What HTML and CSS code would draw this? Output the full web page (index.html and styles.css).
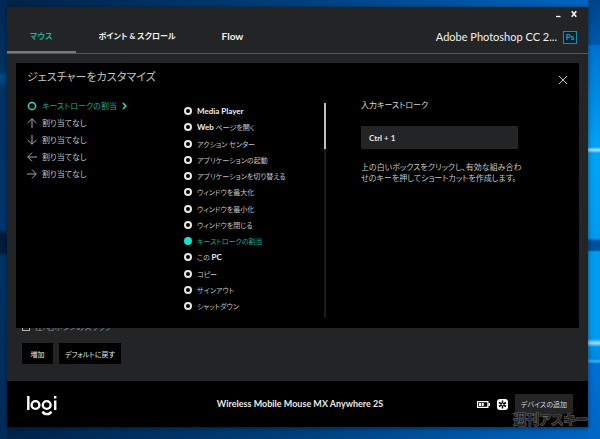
FILE: index.html
```html
<!DOCTYPE html>
<html lang="ja">
<head>
    <meta charset="UTF-8">
    <meta name="viewport" content="width=device-width, initial-scale=1.0">
    <title>Logitech Options</title>
    <link rel="stylesheet" href="styles.css">
</head>
<body>

    <div class="window">
        <!-- Window header -->
        <header class="header">
            <div class="window-controls">
                <button type="button" aria-label="最小化">
                    <svg width="5" height="8" viewBox="0 0 5 8"><path d="M0 6.5h4.5" stroke="#fff" stroke-width="1.3"/></svg>
                </button>
                <button type="button" aria-label="閉じる">
                    <svg width="6" height="8" viewBox="0 0 6 8"><path d="M.7 1.3l4.6 5.4M5.3 1.3L.7 6.7" stroke="#fff" stroke-width="1.5"/></svg>
                </button>
            </div>
            <div class="header-row">
                <nav class="tabs">
                    <a href="#" class="tab active">マウス</a>
                    <a href="#" class="tab">ポイント &amp; スクロール</a>
                    <a href="#" class="tab tab-flow">Flow</a>
                </nav>
                <div class="app">
                    <span class="app-name">Adobe Photoshop CC 2...</span>
                    <span class="app-icon">Ps</span>
                </div>
            </div>
        </header>

        <main class="content">
            <div class="page">
                <label class="swap"><input type="checkbox">左/右ボタンのスワップ</label>
                <div class="page-buttons">
                    <button type="button">増加</button>
                    <button type="button">デフォルトに戻す</button>
                </div>
            </div>

            <!-- Gesture dialog -->
            <section class="dialog">
                <div class="dialog-head">
                    <h1>ジェスチャーをカスタマイズ</h1>
                    <button type="button" class="close" aria-label="閉じる">
                        <svg width="10" height="10" viewBox="0 0 10 10"><path d="M1 1l8 8M9 1L1 9" stroke="#c4c4c4"/></svg>
                    </button>
                </div>
                <div class="dialog-body">
                    <ul class="gestures">
                        <li class="active">
                            <svg class="icon" width="10" height="10" viewBox="0 0 10 10"><circle cx="5" cy="5" r="3.6" stroke-width="1.5"/></svg>
                            <a href="#">キーストロークの割当</a>
                            <svg class="icon" width="5" height="8" viewBox="0 0 5 8"><path d="M1 1l2.8 3L1 7" stroke-width="1.6"/></svg>
                        </li>
                        <li>
                            <svg class="icon" width="10" height="10" viewBox="0 0 10 10"><path d="M5 10V1M.6 5L5 .7 9.400 5"/></svg>
                            <a href="#">割り当てなし</a>
                        </li>
                        <li>
                            <svg class="icon" width="10" height="10" viewBox="0 0 10 10"><path d="M5 0v9M.6 5L5 9.300 9.400 5"/></svg>
                            <a href="#">割り当てなし</a>
                        </li>
                        <li>
                            <svg class="icon" width="10" height="10" viewBox="0 0 10 10"><path d="M10 5H1M5 .6L.7 5 5 9.400"/></svg>
                            <a href="#">割り当てなし</a>
                        </li>
                        <li>
                            <svg class="icon" width="10" height="10" viewBox="0 0 10 10"><path d="M0 5h9M5 .6L9.300 5 5 9.400"/></svg>
                            <a href="#">割り当てなし</a>
                        </li>
                    </ul>

                    <div class="actions">
                        <div class="action-list">
                            <label><input type="radio" name="action"><b>Media Player</b></label>
                            <label><input type="radio" name="action"><span><b>Web</b> ページを開く</span></label>
                            <label><input type="radio" name="action">アクション センター</label>
                            <label><input type="radio" name="action">アプリケーションの起動</label>
                            <label><input type="radio" name="action">アプリケーションを切り替える</label>
                            <label><input type="radio" name="action">ウィンドウを最大化</label>
                            <label><input type="radio" name="action">ウィンドウを最小化</label>
                            <label><input type="radio" name="action">ウィンドウを閉じる</label>
                            <label><input type="radio" name="action" checked>キーストロークの割当</label>
                            <label><input type="radio" name="action"><span>この <b>PC</b></span></label>
                            <label><input type="radio" name="action">コピー</label>
                            <label><input type="radio" name="action">サインアウト</label>
                            <label><input type="radio" name="action">シャットダウン</label>
                        </div>
                        <div class="scrollbar"><div class="thumb"></div></div>
                    </div>

                    <div class="keystroke">
                        <label for="keys">入力キーストローク</label>
                        <input type="text" id="keys" value="Ctrl + 1">
                        <p>上の白いボックスをクリックし、有効な組み合わ<br>せのキーを押してショートカットを作成します。</p>
                    </div>
                </div>
            </section>
        </main>

        <footer class="footer">
            <div class="logo">
                <svg width="30" height="20" viewBox="0 0 30 20" role="img" aria-label="logi">
                    <g fill="none" stroke="#fff" stroke-width="2.400">
                        <path d="M1.300 0v14"/>
                        <circle cx="8.500" cy="9" r="3.900"/>
                        <circle cx="19.700" cy="9" r="3.900"/>
                        <path d="M15.600 15.500c1.200 3.500 7.200 3.500 8.600 0"/>
                        <path d="M28.200 4.500V14M28.200 0v2.600"/>
                    </g>
                </svg>
            </div>
            <div class="device">Wireless Mobile Mouse MX Anywhere 2S</div>
            <div class="status">
                <svg width="13" height="7" viewBox="0 0 13 7">
                    <path d="M.6.6h10.300v5.800H.6z" fill="none" stroke="#fff" stroke-width="1.200"/>
                    <path d="M11.500 2H13v3h-1.500zM2 2h2v3H2zM4.700 2h2v3h-2z" fill="#fff"/>
                </svg>
                <svg width="11" height="11" viewBox="0 0 11 11">
                    <rect width="11" height="11" rx="3" fill="#fff"/>
                    <path d="M5.500 1.500v8M2 3.500l7 4M9 3.500l-7 4" stroke="#000" stroke-width="1.500"/>
                    <circle cx="5.500" cy="5.500" r="1" fill="#fff"/>
                </svg>
                <button type="button" class="add-device">デバイスの追加</button>
            </div>
        </footer>
        <span class="watermark">週刊アスキー</span>
    </div>

</body>
</html>
```
FILE: styles.css
```css
* {
    box-sizing: border-box;
}

body {
    margin: 0;
    padding: 7px 12px 12px 7px;
    min-height: 100vh;
    display: flex;
    font-family: Lato, "Noto Sans CJK JP", sans-serif;
    font-feature-settings: "palt";
    font-size: 8px;
    line-height: 16px;
    color: #c4c4c4;
    background:
        linear-gradient(180deg, #004488 0, #0058ac 44px, #0072d0 46px, #009cf0 132px, #00a4f4 147px, #b0e8fc 150px, #00a4f4 153px, #009cf0 238px, #0050a0 241px, #0050a0 250px, #009cf0 252px, #009cf0 339px, #a0e0fa 343px, #0090ea 347px, #0088e0 359px, #40b0f0 361px, #0070d4 364px, #0066c4 100%) right top / 12px 100% no-repeat,
        linear-gradient(180deg, #002856 0, #003466 72px, #004c88 76px, #003468 90px, #00366e 230px, #001c3c 234px, #001c3c 252px, #003468 256px, #002c5a 100%) left top / 7px 100% no-repeat,
        linear-gradient(90deg, #002248, #00407c 50%, #0066c4);
}

button, input {
    font: inherit;
    font-feature-settings: inherit;
    color: inherit;
    border: none;
    margin: 0;
    padding: 0;
}

button {
    background: none;
    cursor: pointer;
}

a {
    color: inherit;
    text-decoration: none;
}

svg {
    display: block;
}

.window {
    position: relative;
    flex: 1;
    display: flex;
    flex-direction: column;
    background: #222426;
    box-shadow: 0 1px 5px rgba(0, 0, 0, 0.5);
}

/* Header */
.header {
    border-bottom: 1px solid #56585a;
}

.window-controls {
    height: 14px;
    padding-right: 11px;
    display: flex;
    justify-content: flex-end;
    align-items: center;
    gap: 10px;
}

.header-row {
    display: flex;
    justify-content: space-between;
}

.tabs {
    display: flex;
}

.tab {
    padding: 7px 23px;
    height: 32px;
    font-size: 8px;
    font-weight: bold;
    color: #f0f0f0;
}

.tab.active {
    color: #1fae96;
    border-bottom: 2px solid #77797b;
}

.tab-flow {
    font-size: 10px;
}

.app {
    display: flex;
    align-items: center;
    gap: 6px;
    padding-right: 11px;
    color: #f0f0f0;
}

.app-name {
    font-size: 11px;
}

.app-icon {
    width: 14px;
    height: 13px;
    border: 1px solid #1f8ca8;
    background: #06222c;
    color: #26a4c4;
    font-weight: bold;
    line-height: 11px;
    text-align: center;
}

/* Content */
.content {
    position: relative;
    flex: 1;
    display: flex;
    flex-direction: column;
    justify-content: flex-end;
}

.page {
    padding: 0 15px 17px;
}

.swap {
    display: flex;
    align-items: center;
    gap: 5px;
    margin-bottom: 8px;
    color: #8c8e90;
}

.swap input {
    appearance: none;
    width: 8px;
    height: 8px;
    border: 1px solid #b0b0b0;
}

.page-buttons {
    display: flex;
    gap: 6px;
}

.page-buttons button {
    min-width: 31px;
    height: 21px;
    padding: 0 6px;
    background: #000;
    font-size: 7px;
    color: #e8e8e8;
}

/* Dialog */
.dialog {
    position: absolute;
    inset: 9px 9px auto;
    background: #000;
    padding: 4px 11px 10px;
}

.dialog-head {
    display: flex;
    justify-content: space-between;
    height: 30px;
}

h1 {
    margin: 0;
    font-size: 11px;
    font-weight: normal;
    line-height: 20px;
}

.close {
    height: 26px;
}

.dialog-body {
    display: flex;
}

.gestures {
    flex: 0 0 157px;
    margin: 0;
    padding: 0;
    list-style: none;
}

.gestures li {
    display: flex;
    align-items: center;
    gap: 5px;
    height: 17px;
}

.gestures .active {
    color: #1fa890;
}

.icon {
    fill: none;
    stroke: #a8a8a8;
}

.active .icon {
    stroke: #3cd8c0;
}

.actions {
    flex: 0 0 142px;
    display: flex;
    justify-content: space-between;
    padding-top: 6px;
}

.action-list {
    display: flex;
    flex-direction: column;
    justify-content: space-between;
    padding-bottom: 4px;
}

.action-list label {
    display: flex;
    align-items: center;
    gap: 5px;
    height: 16px;
    font-size: 7px;
}

.action-list b {
    font-size: 8px;
    color: #f0f0f0;
}

.action-list input {
    appearance: none;
    width: 8px;
    height: 8px;
    border: 2px solid #e8e8e8;
    border-radius: 50%;
}

.action-list input:checked {
    border-color: #14e4c8;
    background: #14e4c8;
}

.action-list label:has(:checked) {
    color: #1fa890;
}

.scrollbar {
    width: 2px;
    min-height: 215px;
    background: #1c1c1c;
}

.thumb {
    height: 46px;
    background: #c0c0c0;
}

.keystroke {
    flex: 1;
    padding-left: 35px;
}

.keystroke label {
    display: block;
    margin-bottom: 13px;
    color: #d8d8d8;
}

.keystroke input {
    display: block;
    width: 76%;
    height: 23px;
    padding-left: 8px;
    background: #222426;
    font-weight: bold;
    color: #e8e8e8;
}

.keystroke p {
    margin: 13px 0 0;
    line-height: 11px;
}

/* Footer */
.footer {
    display: grid;
    grid-template-columns: 1fr auto 1fr;
    align-items: center;
    height: 46px;
    padding: 0 15px 0 20px;
    background: #000;
}

.logo {
    padding-top: 4px;
}

.device {
    font-size: 9px;
    font-weight: bold;
    color: #e8e8e8;
}

.status {
    display: flex;
    justify-content: flex-end;
    align-items: center;
    gap: 7px;
}

.add-device {
    height: 20px;
    padding: 0 6px;
    background: #222426;
    font-size: 7px;
    color: #d8d8d8;
}

.watermark {
    position: absolute;
    right: 0;
    bottom: 0;
    font-size: 13px;
    font-weight: bold;
    color: #222426;
    -webkit-text-stroke: 1px #6c6c6c;
    paint-order: stroke;
}
```
